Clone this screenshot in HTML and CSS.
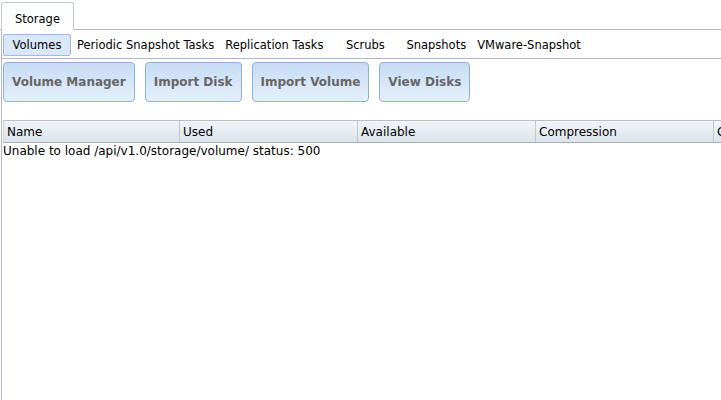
FILE: index.html
```html
<!DOCTYPE html>
<html lang="en">
<head>
  <meta charset="UTF-8" />
  <title>Storage</title>
  <link rel="stylesheet" href="styles.css">
</head>
<body>
  <div class="tabbar">
    <div class="tab">Storage</div>
  </div>

  <div class="panel">
    <div class="subtabs">
      <span class="subtab active">Volumes</span>
      <span class="subtab">Periodic Snapshot Tasks</span>
      <span class="subtab">Replication Tasks</span>
      <span class="subtab">Scrubs</span>
      <span class="subtab">Snapshots</span>
      <span class="subtab">VMware-Snapshot</span>
    </div>

    <div class="actions">
      <button class="btn">Volume Manager</button>
      <button class="btn">Import Disk</button>
      <button class="btn">Import Volume</button>
      <button class="btn">View Disks</button>
    </div>

    <div class="grid">
      <div class="grid-head">
        <div class="col">Name</div>
        <div class="col">Used</div>
        <div class="col">Available</div>
        <div class="col">Compression</div>
        <div class="col">Compression Ratio</div>
      </div>
      <div class="grid-msg">Unable to load /api/v1.0/storage/volume/ status: 500</div>
    </div>
  </div>
</body>
</html>
```

FILE: styles.css
```css
html, body {
  height: 100%;
}

body {
  margin: 0;
  font-family: 'DejaVu Sans', sans-serif;
  font-size: 12px;
  color: #000;
  background: #fff;
  overflow: hidden;
}

.tabbar {
  height: 29px;
  border-bottom: 1px solid #b5b8c8;
  display: flex;
  align-items: flex-end;
  padding-left: 1px;
}

.tab {
  width: 71px;
  height: 27px;
  margin-bottom: -1px;
  border: 1px solid #c5cad4;
  border-bottom: none;
  border-radius: 3px 3px 0 0;
  background: linear-gradient(#fbfcfd, #fff);
  text-align: center;
  line-height: 33px;
  font-size: 11.5px;
  box-sizing: content-box;
}

.panel {
  border-left: 1px solid #b5b8c8;
  margin-left: 1px;
  height: calc(100% - 30px);
  box-sizing: border-box;
}

.subtabs {
  height: 29px;
  border-bottom: 1px solid #b5b8c8;
  display: flex;
  align-items: center;
  gap: 1px;
  padding: 1px 0 0 1px;
  box-sizing: border-box;
  white-space: nowrap;
}

.subtab {
  min-width: 68px;
  height: 22px;
  line-height: 20px;
  padding: 0 4px;
  box-sizing: border-box;
  text-align: center;
  border: 1px solid transparent;
  border-radius: 2px;
  font-size: 11.5px;
}

.subtab:nth-child(4) {
  margin-left: 2px;
}

.subtab:nth-child(5) {
  margin-left: 1px;
}

.subtab.active {
  background: #d9e7f8;
  border-color: #99bbe8;
}

.actions {
  display: flex;
  gap: 10px;
  padding: 3px 0 0 1px;
}

.btn {
  height: 40px;
  padding: 0 8px;
  font-family: inherit;
  font-size: 12px;
  font-weight: bold;
  color: #666;
  border: 1px solid #8eb1dc;
  border-radius: 4px;
  background: linear-gradient(#c6dbf4, #e6f0fb);
}

.grid {
  margin-top: 18px;
  margin-left: 1px;
}

.grid-head {
  display: flex;
  height: 23px;
  border-top: 1px solid #b9bfc8;
  border-bottom: 1px solid #a9acb1;
  border-left: 1px solid #d0d0d0;
  background: linear-gradient(#f2f5f9, #dde4ee);
  box-sizing: border-box;
  white-space: nowrap;
  overflow: hidden;
}

.col {
  flex: 0 0 178px;
  box-sizing: border-box;
  padding-left: 3px;
  line-height: 22px;
  border-right: 1px solid #c5c5c5;
}

.col:first-child {
  flex-basis: 176px;
}

.grid-msg {
  padding-top: 1px;
  line-height: 14px;
}
```
